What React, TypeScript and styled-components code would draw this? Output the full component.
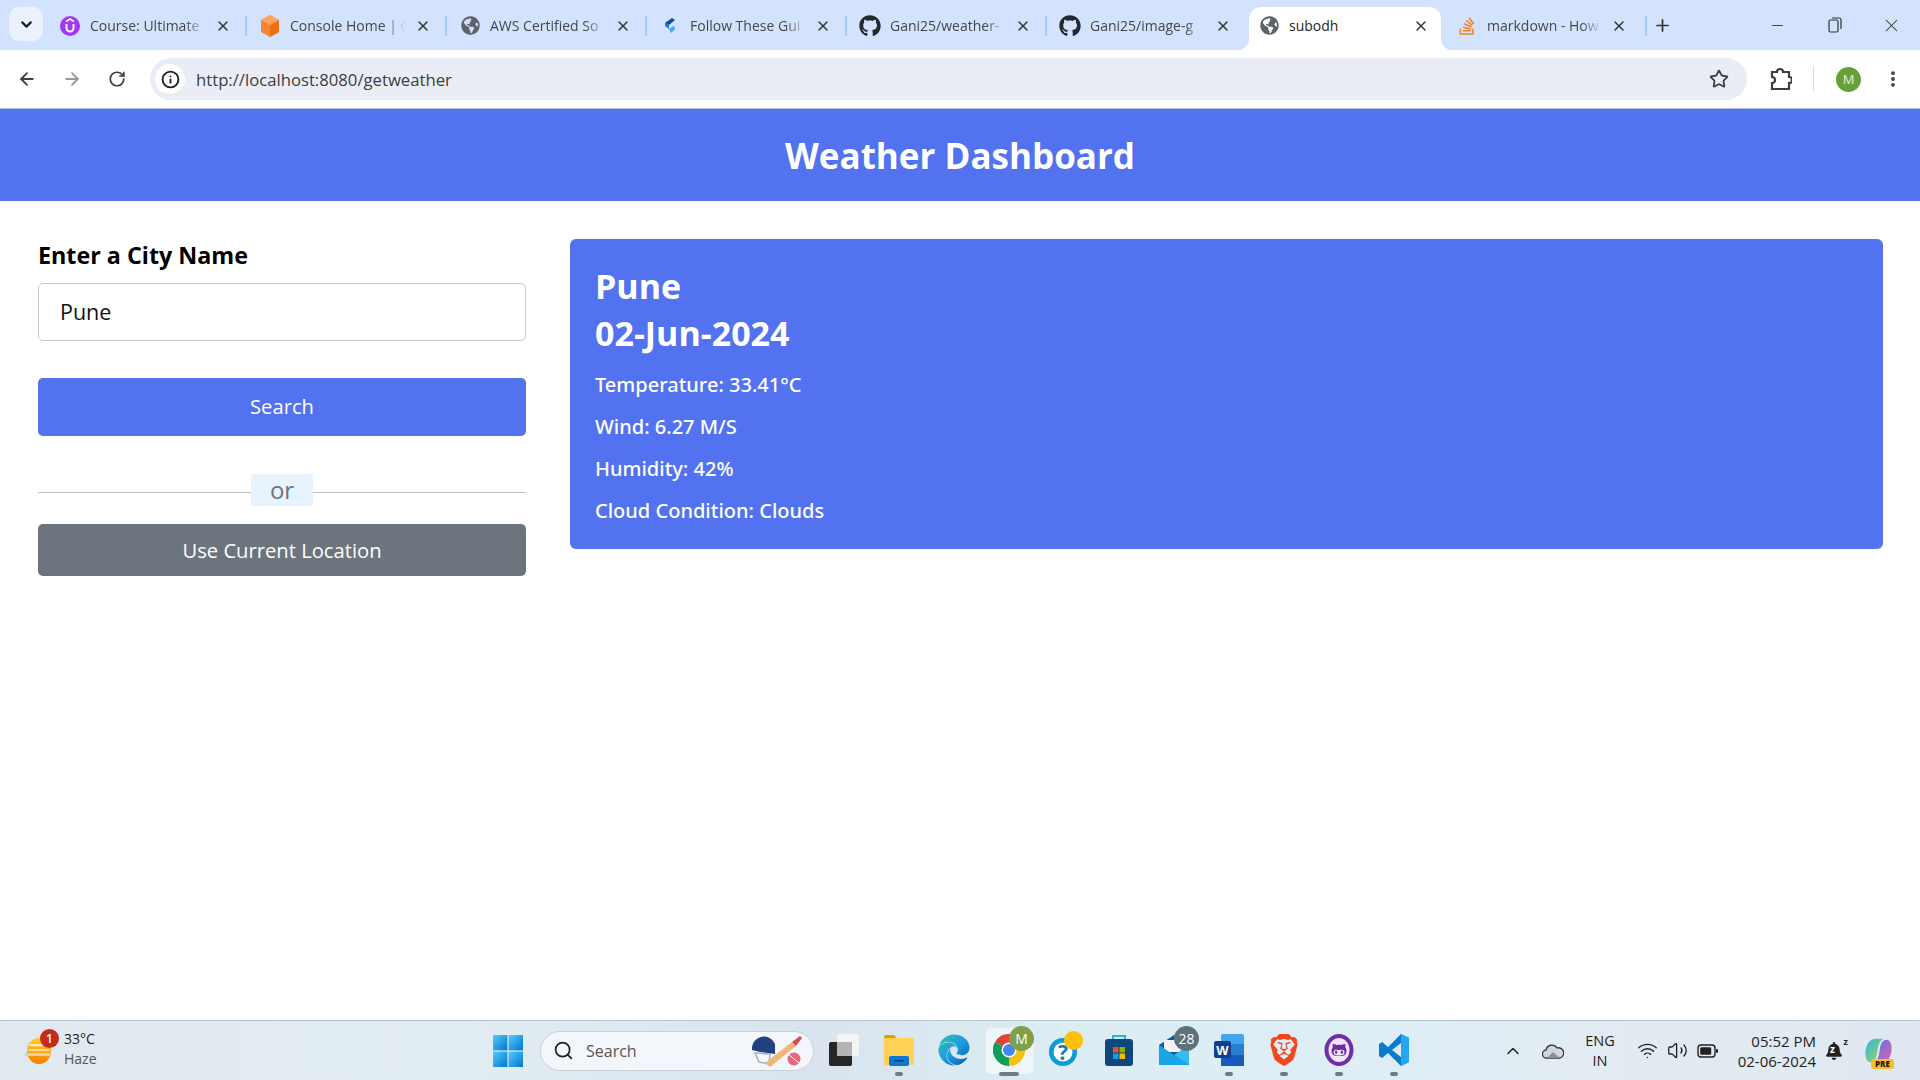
import React from 'react';
import styled, { createGlobalStyle } from 'styled-components';
import {
  ArrowLeft,
  ArrowRight,
  ChevronDown,
  ChevronUp,
  Info,
  Minus,
  MoreVertical,
  Plus,
  RotateCw,
  Search,
  Star,
  Volume2,
  Wifi,
  X,
} from 'lucide-react';
import { FaEdge, FaGithub, FaGithubAlt, FaGlobeAmericas, FaStackOverflow, FaBell } from 'react-icons/fa';
import { SiBrave } from 'react-icons/si';

const GlobalStyle = createGlobalStyle`
  html, body {
    margin: 0;
    padding: 0;
    width: 1920px;
    height: 1080px;
    overflow: hidden;
    background: #fff;
    font-family: "Open Sans", "Noto Sans", sans-serif;
  }
  * { box-sizing: border-box; }
`;

const Screen = styled.div`
  width: 1920px;
  height: 1080px;
  display: flex;
  flex-direction: column;
`;

const GradientDefs = styled.svg`
  display: block;
  width: 0;
  height: 0;
`;

// 탭 줄
const TabStrip = styled.div`
  height: 50px;
  background: #d3e3fd;
  display: flex;
  align-items: flex-end;
  padding-left: 9px;
  position: relative;
`;

const TabSearch = styled.div`
  width: 34px;
  height: 34px;
  margin: 0 3px 9px 0;
  border-radius: 10px;
  background: #ebf1fd;
  display: flex;
  align-items: center;
  justify-content: center;
  color: #1f1f1f;
`;

const Tab = styled.div<{ $active?: boolean; $divider?: boolean; $last?: boolean }>`
  width: ${(p) => (p.$active ? '192px' : p.$last ? '203px' : '200px')};
  margin: ${(p) => (p.$active ? '0 2px 0 3px' : '0')};
  height: 43px;
  display: flex;
  align-items: center;
  padding: 0 ${(p) => (p.$last ? '19px' : p.$active ? '12px' : '15px')} 6px ${(p) => (p.$active ? '9px' : '13px')};
  gap: 9px;
  position: relative;
  background: ${(p) => (p.$active ? '#fff' : 'transparent')};
  border-radius: 12px 12px 0 0;
  color: ${(p) => (p.$active ? '#1f1f1f' : '#45474a')};

  ${(p) =>
    p.$divider &&
    `&::after {
      content: '';
      position: absolute;
      right: -1px;
      top: 9px;
      height: 20px;
      width: 2px;
      background: #a8c7fa;
    }`}

  ${(p) =>
    p.$active &&
    `&::before, &::after {
      content: '';
      position: absolute;
      bottom: 0;
      width: 12px;
      height: 12px;
    }
    &::before {
      left: -12px;
      background: radial-gradient(circle at 0 0, transparent 12px, #fff 12.5px);
    }
    &::after {
      right: -12px;
      background: radial-gradient(circle at 100% 0, transparent 12px, #fff 12.5px);
    }`}
`;

const Favicon = styled.span`
  width: 22px;
  height: 22px;
  flex: none;
  display: flex;
  align-items: center;
  justify-content: center;
`;

const TabTitle = styled.span<{ $fade: boolean }>`
  flex: 1;
  min-width: 0;
  font-size: 14px;
  white-space: nowrap;
  ${(p) => p.$fade && 'mask-image: linear-gradient(90deg, #000 82%, transparent 100%);'}
`;

const TabClose = styled.span`
  display: flex;
  color: #333;
  flex: none;
`;

const NewTab = styled.span`
  display: flex;
  margin: 0 0 8px 7px;
  color: #333;
  align-self: flex-end;
  height: 34px;
  align-items: center;
`;

const WindowControls = styled.div`
  margin-left: auto;
  display: flex;
  align-self: flex-start;
  height: 50px;
  align-items: center;
  color: #333;
`;

const WindowButton = styled.span`
  width: 57px;
  display: flex;
  justify-content: center;
`;

// 주소 표시줄
const Toolbar = styled.div`
  height: 59px;
  background: #fff;
  border-radius: 10px 10px 0 0;
  border-bottom: 1px solid #aebfdc;
  display: flex;
  align-items: center;
  padding: 0 0 0 9px;
`;

const NavButton = styled.span<{ $dim?: boolean }>`
  width: 36px;
  margin-right: 9px;
  display: flex;
  justify-content: center;
  color: ${(p) => (p.$dim ? '#9a9a9a' : '#3c3f43')};
`;

const Omnibox = styled.div`
  width: 1597px;
  height: 42px;
  margin-left: 6px;
  border-radius: 21px;
  background: #eaedf6;
  display: flex;
  align-items: center;
  padding: 0 18px 0 5px;
  color: #3f4144;
`;

const InfoChip = styled.span`
  width: 30px;
  height: 30px;
  border-radius: 50%;
  background: #fff;
  display: flex;
  align-items: center;
  justify-content: center;
  color: #1f1f1f;
`;

const Url = styled.span`
  margin-left: 11px;
  font-size: 16.7px;
  flex: 1;
  color: #3c3d40;
`;

const ToolbarActions = styled.div`
  flex: 1;
  display: flex;
  align-items: center;
  padding-left: 23px;
  color: #3c3f43;
`;

const ToolbarDivider = styled.span`
  width: 1px;
  height: 26px;
  margin: 0 22px 0 21px;
  background: #d5dbe8;
`;

const Avatar = styled.span`
  width: 25px;
  height: 25px;
  border-radius: 50%;
  background: #689f38;
  color: #e8f1dc;
  font-size: 13px;
  display: flex;
  align-items: center;
  justify-content: center;
`;

const Kebab = styled.span`
  display: flex;
  margin-left: 22px;
`;

// 페이지 본문
const Page = styled.main`
  flex: 1;
  display: flex;
  flex-direction: column;
  min-height: 0;
  background: #fff;
`;

const Header = styled.header`
  height: 92px;
  background: #5372f0;
  color: #fff;
  display: flex;
  align-items: center;
  justify-content: center;
`;

const Title = styled.h1`
  margin: 0;
  font-size: 35px;
  font-weight: 700;
`;

const Content = styled.div`
  display: flex;
  align-items: flex-start;
  gap: 44px;
  padding: 38px 37px 0 38px;
`;

const FormColumn = styled.section`
  width: 488px;
  flex: none;
`;

const CityLabel = styled.h3`
  margin: 0 0 12px;
  font-size: 23.3px;
  line-height: 32px;
  font-weight: 700;
  color: #000;
`;

const CityInput = styled.div`
  height: 58px;
  border: 1px solid #c9c9c9;
  border-radius: 5px;
  padding: 0 21px 1px;
  display: flex;
  align-items: center;
  font-size: 21.5px;
  color: #111;
`;

const ActionButton = styled.div<{ $grey?: boolean }>`
  height: ${(p) => (p.$grey ? '52px' : '58px')};
  margin-top: ${(p) => (p.$grey ? '0' : '37px')};
  padding-bottom: ${(p) => (p.$grey ? '0' : '2px')};
  border-radius: 5px;
  background: ${(p) => (p.$grey ? '#6c757d' : '#5372f0')};
  color: #fff;
  display: flex;
  align-items: center;
  justify-content: center;
  font-size: 20.2px;
`;

const Separator = styled.div`
  height: 88px;
  padding-top: 38px;
  display: flex;
  justify-content: center;
  align-items: flex-start;
  background: linear-gradient(#bdbdbd, #bdbdbd) 0 56px / 100% 1px no-repeat;
`;

const SeparatorText = styled.span`
  width: 62px;
  height: 32px;
  background: #e7f3ff;
  color: #6c757d;
  font-size: 24px;
  line-height: 32px;
  text-align: center;
`;

const WeatherCard = styled.section`
  flex: 1;
  height: 310px;
  background: #5372f0;
  border-radius: 6px;
  padding: 24px 25px;
  color: #fff;
`;

const CardHeading = styled.h2`
  margin: 0 0 8px;
  font-size: 34px;
  line-height: 46.5px;
  font-weight: 700;
`;

const CardRow = styled.p`
  margin: 0;
  font-family: "Noto Sans", "Open Sans", sans-serif;
  font-size: 20px;
  line-height: 42px;
  font-weight: 500;
`;

// 작업 표시줄
const Taskbar = styled.footer`
  height: 60px;
  flex: none;
  border-top: 1px solid #b9c3cb;
  background: linear-gradient(90deg, #e0e9ee 0%, #e2edf3 22%, #d9e4ee 42%, #dcecf3 55%, #deeef6 70%, #e3ebf2 85%, #dfe8f0 100%);
  display: flex;
  align-items: center;
  position: relative;
`;

const WeatherWidget = styled.div`
  width: 490px;
  flex: none;
  display: flex;
  align-items: center;
  padding-left: 25px;
  gap: 11px;
`;

const SunBadgeWrap = styled.span`
  position: relative;
  display: flex;
  width: 28px;
  height: 26px;
`;

const AlertBadge = styled.span`
  position: absolute;
  top: -9px;
  left: 15px;
  width: 19px;
  height: 19px;
  border-radius: 50%;
  background: #c42b1c;
  color: #fff;
  font-size: 12px;
  font-weight: 600;
  display: flex;
  align-items: center;
  justify-content: center;
`;

const WidgetText = styled.div`
  margin-top: -3px;
  font-size: 14px;
  line-height: 20.5px;
  color: #222;
`;

const WidgetSub = styled.div`
  color: #555;
`;

const StartButton = styled.span`
  display: flex;
  width: 30px;
  margin-right: 17px;
  margin-left: 3px;
`;

const SearchPill = styled.div`
  width: 274px;
  height: 40px;
  border-radius: 20px;
  background: #f3f7fb;
  border: 1px solid #c7d0d9;
  display: flex;
  align-items: center;
  padding: 0 11px 0 12px;
  gap: 12px;
  color: #222;
  font-size: 16px;
  flex: none;
`;

const PillLabel = styled.span`
  flex: 1;
  color: #555;
`;

const TaskIcons = styled.div`
  display: flex;
  margin-left: 2px;
`;

const TaskIcon = styled.div<{ $active?: boolean; $running?: boolean }>`
  width: 55px;
  height: 56px;
  position: relative;
  display: flex;
  align-items: center;
  justify-content: center;
  padding-bottom: 2px;

  ${(p) =>
    p.$active &&
    `&::before {
      content: '';
      position: absolute;
      inset: 5px 4px 5px 5px;
      border-radius: 5px;
      background: rgba(255,255,255,.55);
      box-shadow: 3px 0 0 -1px rgba(255,255,255,.5);
    }`}

  ${(p) =>
    p.$running &&
    `&::after {
      content: '';
      position: absolute;
      bottom: 3px;
      left: 50%;
      transform: translateX(-50%);
      width: ${p.$active ? '20px' : '8px'};
      height: 4px;
      border-radius: 2px;
      background: #6f7b84;
    }`}

  & > svg { position: relative; }
`;

const IconBadge = styled.span<{ $bg: string }>`
  position: absolute;
  top: 3px;
  right: 2px;
  min-width: 25px;
  height: 25px;
  border-radius: 50%;
  background: ${(p) => p.$bg};
  color: #fff;
  font-size: 14px;
  display: flex;
  align-items: center;
  justify-content: center;
`;

const Tray = styled.div`
  margin-left: auto;
  display: flex;
  align-items: center;
  color: #222;
  height: 100%;
`;

const TrayIcon = styled.span<{ $w: number }>`
  width: ${(p) => p.$w}px;
  display: flex;
  justify-content: center;
`;

const TrayLang = styled.div`
  width: 44px;
  text-align: center;
  font-size: 14.5px;
  line-height: 20px;
  margin: 0 10px 0 5px;
`;

const Clock = styled.div`
  width: 92px;
  margin-left: 2px;
  text-align: right;
  font-size: 15px;
  line-height: 20px;
`;

const BellWrap = styled.span`
  position: relative;
  display: flex;
  margin: 0 21px 0 9px;
`;

const BellInnerZ = styled.span`
  position: absolute;
  top: 2px;
  left: 5px;
  color: #fff;
  font-size: 10px;
  line-height: 11px;
  font-weight: 700;
`;

const BellSnooze = styled.span`
  position: absolute;
  top: -5px;
  right: -5px;
  font-size: 9px;
  line-height: 10px;
  font-weight: 700;
`;

const CopilotWrap = styled.span`
  position: relative;
  display: flex;
  margin-right: 27px;
`;

const PreTag = styled.span`
  position: absolute;
  left: 7px;
  bottom: -4px;
  width: 23px;
  height: 10px;
  border-radius: 3px;
  background: #fbbf24;
  color: #1c1c1c;
  font-size: 8px;
  font-weight: 800;
  line-height: 10px;
  text-align: center;
`;

const Udemy = () => (
  <svg width="20" height="20" viewBox="0 0 20 20">
    <circle cx="10" cy="10" r="10" fill="#a435f0" />
    <path d="M6.5 8 V12 A3.5 3.5 0 0 0 13.5 12 V8" fill="none" stroke="#fff" strokeWidth="2" />
    <path d="M6 5.5 L10 3 L14 5.5" fill="none" stroke="#fff" strokeWidth="1.5" />
  </svg>
);

const AwsCube = () => (
  <svg width="20" height="22" viewBox="0 0 20 22">
    <path d="M10 0 L19 5 V17 L10 22 L1 17 V5 Z" fill="#f58536" />
    <path d="M10 10 L19 5 V17 L10 22 Z" fill="#ec7211" />
    <path d="M10 0 L19 5 L10 10 L1 5 Z" fill="#ffa45c" />
  </svg>
);

const GuideMark = () => (
  <svg width="16" height="18" viewBox="0 0 16 18">
    <path d="M10 1 L13 3 L7 8 L3 6 Z" fill="#0f4c9c" />
    <path d="M3 6 L7 8 L7 12 L3 9 Z" fill="#1976d2" />
    <path d="M7 12 L12 9 L13 12 L9 16 Z" fill="#42a5f5" />
  </svg>
);

const SunHaze = () => (
  <svg width="28" height="26" viewBox="0 0 28 26">
    <defs>
      <linearGradient id="hazeSun" x1="0" y1="0" x2="0" y2="1">
        <stop offset="0" stopColor="#ffd21f" />
        <stop offset="1" stopColor="#f57c00" />
      </linearGradient>
    </defs>
    <ellipse cx="14" cy="13" rx="12" ry="13" fill="url(#hazeSun)" />
    <rect x="4" y="6" width="20" height="2.2" rx="1.1" fill="#f7e9c4" />
    <rect x="3" y="11" width="22" height="2.2" rx="1.1" fill="#f5d9a0" />
    <rect x="0" y="15" width="26" height="3" rx="1.5" fill="#e8cfa0" />
  </svg>
);

const WinLogo = () => (
  <svg width="30" height="32" viewBox="0 0 30 32">
    <defs>
      <linearGradient id="winTiles" x1="0" y1="0" x2="1" y2="1">
        <stop offset="0" stopColor="#52cbfb" />
        <stop offset="1" stopColor="#0475d1" />
      </linearGradient>
    </defs>
    <rect x="0" y="0" width="14.4" height="15.4" fill="url(#winTiles)" />
    <rect x="15.6" y="0" width="14.4" height="15.4" fill="url(#winTiles)" />
    <rect x="0" y="16.6" width="14.4" height="15.4" fill="url(#winTiles)" />
    <rect x="15.6" y="16.6" width="14.4" height="15.4" fill="url(#winTiles)" />
  </svg>
);

const CricketArt = () => (
  <svg width="50" height="32" viewBox="0 0 50 32">
    <path d="M0 15 A12 12 0 0 1 23 9 L23 19 L8 17 Z" fill="#23407f" />
    <path d="M3 18 L18 19 L17 29 L7 27 Z" fill="none" stroke="#a8b0b8" strokeWidth="1.5" />
    <path d="M13 28 L40 7 L44 11 L18 32 Z" fill="#f0b67a" />
    <path d="M40 7 L48 1 L50 3 L44 11 Z" fill="#d94a4a" />
    <circle cx="42" cy="24" r="6.5" fill="#e9647d" />
    <path d="M37 20 L47 28" stroke="#fff" strokeWidth="1" />
  </svg>
);

const TaskView = () => (
  <svg width="30" height="32" viewBox="0 0 30 32">
    <rect x="0" y="8" width="23" height="24" rx="2" fill="#262626" />
    <rect x="8" y="0" width="22" height="22" rx="2" fill="#f4f4f4" />
    <rect x="8" y="8" width="15" height="14" fill="#b4b4b4" />
  </svg>
);

const Explorer = () => (
  <svg width="30" height="32" viewBox="0 0 30 32">
    <path d="M0 3 A2 2 0 0 1 2 1 H10 L14 5 H0 Z" fill="#d9a200" />
    <rect x="0" y="4" width="30" height="27" rx="1" fill="#ffd257" />
    <rect x="5" y="22" width="20" height="10" rx="2" fill="#0b78d4" />
    <rect x="10" y="26" width="10" height="1.5" fill="#0a3d73" />
  </svg>
);

const Chrome = () => (
  <svg width="32" height="32" viewBox="0 0 32 32">
    <path d="M16 16 L2.1 8 A16 16 0 0 1 29.9 8 Z" fill="#db4437" />
    <path d="M16 16 L29.9 8 A16 16 0 0 1 16 32 Z" fill="#f4c20d" />
    <path d="M16 16 L16 32 A16 16 0 0 1 2.1 8 Z" fill="#0f9d58" />
    <circle cx="16" cy="16" r="7.5" fill="#fff" />
    <circle cx="16" cy="16" r="6" fill="#4285f4" />
  </svg>
);

const HelpApp = () => (
  <svg width="38" height="38" viewBox="0 0 38 38">
    <circle cx="18" cy="21" r="14" fill="#0b9cd8" />
    <circle cx="18" cy="21" r="9.5" fill="#fff" />
    <text x="18" y="28.5" textAnchor="middle" fontSize="21" fontWeight="700" fill="#0b7db8" fontFamily="Open Sans, sans-serif">?</text>
    <circle cx="28.5" cy="9.5" r="9.5" fill="#ffc107" />
  </svg>
);

const Store = () => (
  <svg width="28" height="32" viewBox="0 0 28 32">
    <path d="M8 6 V2 H20 V6" fill="none" stroke="#1eb6e8" strokeWidth="2" />
    <rect x="0" y="5" width="28" height="27" rx="3" fill="#11457e" />
    <rect x="8" y="13" width="5.5" height="5.5" fill="#f25022" />
    <rect x="14.5" y="13" width="5.5" height="5.5" fill="#7fba00" />
    <rect x="8" y="19.5" width="5.5" height="5.5" fill="#00a4ef" />
    <rect x="14.5" y="19.5" width="5.5" height="5.5" fill="#ffb900" />
  </svg>
);

const Mail = () => (
  <svg width="30" height="30" viewBox="0 0 30 30">
    <path d="M0 10 L15 0 L30 10 V30 H0 Z" fill="#0f5c9c" />
    <path d="M5 5 H25 V17 H5 Z" fill="#f4f4f4" />
    <path d="M0 10 L15 20 L30 30 H0 Z" fill="#19a6e8" />
    <path d="M30 10 V30 L15 20 Z" fill="#35bdf2" />
  </svg>
);

const Word = () => (
  <svg width="30" height="32" viewBox="0 0 30 32">
    <rect x="7" y="0" width="23" height="32" rx="2" fill="#41a5ee" />
    <rect x="7" y="10" width="23" height="11" fill="#2b7cd3" />
    <rect x="7" y="21" width="23" height="11" fill="#185abd" />
    <rect x="0" y="7" width="17" height="17" rx="2" fill="#103f91" />
    <text x="8.5" y="20.5" textAnchor="middle" fontSize="13" fontWeight="700" fill="#fff" fontFamily="Liberation Sans, sans-serif">W</text>
  </svg>
);

const GithubDesktop = () => (
  <svg width="30" height="32" viewBox="0 0 30 32">
    <ellipse cx="15" cy="16" rx="14.5" ry="16" fill="#6f2da8" />
    <ellipse cx="15" cy="16" rx="10.5" ry="12" fill="#f0e6f7" />
    <FaGithubAlt x="7" y="8" size={16} color="#6f2da8" />
  </svg>
);

const VsCode = () => (
  <svg width="30" height="32" viewBox="0 0 30 32">
    <path d="M22 0 L9 13 L3 8 L0 10 V22 L3 24 L9 19 L22 32 L30 28 V4 Z M22 9 V23 L13 16 Z" fill="#0a7ccf" fillRule="evenodd" />
    <path d="M22 0 L30 4 V28 L22 32 Z" fill="#22a7f0" />
  </svg>
);

const Onedrive = () => (
  <svg width="22" height="16" viewBox="0 0 22 16">
    <path d="M5 15 A4 4 0 0 1 4 7 A6 6 0 0 1 15 5 A5 5 0 0 1 18 15 Z" fill="#d2d6da" stroke="#333" strokeWidth="1.3" />
    <path d="M5 15 L11 9 L18 15 Z" fill="#8a8f94" />
  </svg>
);

const Battery = () => (
  <svg width="21" height="14" viewBox="0 0 21 14">
    <rect x="1" y="1" width="17" height="12" rx="3" fill="none" stroke="#222" strokeWidth="1.4" />
    <rect x="3.2" y="3.2" width="11" height="7.6" rx="1.4" fill="#222" />
    <rect x="19" y="5" width="2" height="4" rx="1" fill="#222" />
  </svg>
);

const Copilot = () => (
  <svg width="29" height="28" viewBox="0 0 30 30">
    <defs>
      <linearGradient id="copilotL" x1="0" y1="0" x2="1" y2="1">
        <stop offset="0" stopColor="#2fb5e8" />
        <stop offset="1" stopColor="#a6d64a" />
      </linearGradient>
      <linearGradient id="copilotR" x1="0" y1="0" x2="1" y2="1">
        <stop offset="0" stopColor="#4a7be8" />
        <stop offset="1" stopColor="#e45fb0" />
      </linearGradient>
    </defs>
    <path d="M1 18 C1 8 6 2 12 2 H21 C17 3 15 8 14 14 C13 24 10 27 6 27 C3 27 1 23 1 18 Z" fill="url(#copilotL)" />
    <path d="M29 12 C29 22 24 28 18 28 H9 C13 27 15 22 16 16 C17 6 20 3 24 3 C27 3 29 7 29 12 Z" fill="url(#copilotR)" />
  </svg>
);

const tabs = [
  { title: 'Course: Ultimate', icon: <Udemy /> },
  { title: 'Console Home | C', icon: <AwsCube /> },
  { title: 'AWS Certified So', icon: <FaGlobeAmericas size={19} color="#5f6368" /> },
  { title: 'Follow These Gui', icon: <GuideMark /> },
  { title: 'Gani25/weather-', icon: <FaGithub size={22} color="#24292f" /> },
  { title: 'Gani25/image-g', icon: <FaGithub size={22} color="#24292f" /> },
  { title: 'subodh', icon: <FaGlobeAmericas size={19} color="#5f6368" />, active: true },
  { title: 'markdown - How', icon: <FaStackOverflow size={20} color="#f48024" />, last: true },
];

const weatherRows = [
  'Temperature: 33.41°C',
  'Wind: 6.27 M/S',
  'Humidity: 42%',
  'Cloud Condition: Clouds',
];

const App: React.FC = () => {
  return (
    <Screen>
      <GlobalStyle />
      <GradientDefs aria-hidden="true">
        <defs>
          <linearGradient id="edgeFill" x1="0" y1="0" x2="1" y2="1">
            <stop offset="0" stopColor="#35c1a0" />
            <stop offset="0.5" stopColor="#1b9de2" />
            <stop offset="1" stopColor="#0c59a4" />
          </linearGradient>
        </defs>
      </GradientDefs>

      <TabStrip>
        <TabSearch>
          <ChevronDown size={17} strokeWidth={3} />
        </TabSearch>
        {tabs.map((tab, i) => (
          <Tab
            key={tab.title}
            $active={tab.active}
            $last={tab.last}
            $divider={!tab.active && i !== 5}
          >
            <Favicon>{tab.icon}</Favicon>
            <TabTitle $fade={!tab.active}>{tab.title}</TabTitle>
            <TabClose>
              <X size={16} strokeWidth={2.2} />
            </TabClose>
          </Tab>
        ))}
        <NewTab>
          <Plus size={19} strokeWidth={2.2} />
        </NewTab>
        <WindowControls>
          <WindowButton>
            <Minus size={17} strokeWidth={1.3} />
          </WindowButton>
          <WindowButton>
            <svg width="14" height="16" viewBox="0 0 14 16" fill="none" stroke="#333" strokeWidth="1.2">
              <rect x="1" y="3" width="9" height="12" rx="1.5" />
              <path d="M4 1 H11 A2 2 0 0 1 13 3 V12" />
            </svg>
          </WindowButton>
          <WindowButton>
            <X size={21} strokeWidth={1.2} />
          </WindowButton>
        </WindowControls>
      </TabStrip>

      <Toolbar>
        <NavButton>
          <ArrowLeft size={20} strokeWidth={2.2} />
        </NavButton>
        <NavButton $dim>
          <ArrowRight size={20} strokeWidth={2.2} />
        </NavButton>
        <NavButton>
          <RotateCw size={18} strokeWidth={2.3} />
        </NavButton>
        <Omnibox>
          <InfoChip>
            <Info size={19} strokeWidth={2.4} />
          </InfoChip>
          <Url>http://localhost:8080/getweather</Url>
          <Star size={20} strokeWidth={2.2} />
        </Omnibox>
        <ToolbarActions>
          <svg width="22" height="24" viewBox="0 0 22 24" fill="none" stroke="#3c3f43" strokeWidth="2.2">
            <path d="M2 5 H7 A3 3 0 0 1 13 5 H19 V10 A3 3 0 0 1 19 16 V22 H2 V16 A3 3 0 0 0 2 10 Z" />
          </svg>
          <ToolbarDivider />
          <Avatar>M</Avatar>
          <Kebab>
            <MoreVertical size={20} strokeWidth={2.6} />
          </Kebab>
        </ToolbarActions>
      </Toolbar>

      <Page>
        <Header>
          <Title>Weather Dashboard</Title>
        </Header>
        <Content>
          <FormColumn>
            <CityLabel>Enter a City Name</CityLabel>
            <CityInput>Pune</CityInput>
            <ActionButton>Search</ActionButton>
            <Separator>
              <SeparatorText>or</SeparatorText>
            </Separator>
            <ActionButton $grey>Use Current Location</ActionButton>
          </FormColumn>
          <WeatherCard>
            <CardHeading>
              Pune
              <br />
              02-Jun-2024
            </CardHeading>
            {weatherRows.map((row) => (
              <CardRow key={row}>{row}</CardRow>
            ))}
          </WeatherCard>
        </Content>
      </Page>

      <Taskbar>
        <WeatherWidget>
          <SunBadgeWrap>
            <SunHaze />
            <AlertBadge>1</AlertBadge>
          </SunBadgeWrap>
          <WidgetText>
            33°C
            <WidgetSub>Haze</WidgetSub>
          </WidgetText>
        </WeatherWidget>
        <StartButton>
          <WinLogo />
        </StartButton>
        <SearchPill>
          <Search size={21} strokeWidth={2} />
          <PillLabel>Search</PillLabel>
          <CricketArt />
        </SearchPill>
        <TaskIcons>
          <TaskIcon>
            <TaskView />
          </TaskIcon>
          <TaskIcon $running>
            <Explorer />
          </TaskIcon>
          <TaskIcon>
            <FaEdge size={32} fill="url(#edgeFill)" />
          </TaskIcon>
          <TaskIcon $active $running>
            <Chrome />
            <IconBadge $bg="#7f9f48">M</IconBadge>
          </TaskIcon>
          <TaskIcon>
            <HelpApp />
          </TaskIcon>
          <TaskIcon>
            <Store />
          </TaskIcon>
          <TaskIcon>
            <Mail />
            <IconBadge $bg="#5f717d">28</IconBadge>
          </TaskIcon>
          <TaskIcon $running>
            <Word />
          </TaskIcon>
          <TaskIcon $running>
            <SiBrave size={32} color="#f1471d" />
          </TaskIcon>
          <TaskIcon $running>
            <GithubDesktop />
          </TaskIcon>
          <TaskIcon $running>
            <VsCode />
          </TaskIcon>
        </TaskIcons>
        <Tray>
          <TrayIcon $w={40}>
            <ChevronUp size={20} strokeWidth={1.8} />
          </TrayIcon>
          <TrayIcon $w={40}>
            <Onedrive />
          </TrayIcon>
          <TrayLang>
            ENG
            <br />
            IN
          </TrayLang>
          <TrayIcon $w={30}>
            <Wifi size={21} strokeWidth={1.6} />
          </TrayIcon>
          <TrayIcon $w={30}>
            <Volume2 size={21} strokeWidth={1.5} />
          </TrayIcon>
          <TrayIcon $w={30}>
            <Battery />
          </TrayIcon>
          <Clock>
            05:52 PM
            <br />
            02-06-2024
          </Clock>
          <BellWrap>
            <FaBell size={18} color="#222" />
            <BellInnerZ>z</BellInnerZ>
            <BellSnooze>z</BellSnooze>
          </BellWrap>
          <CopilotWrap>
            <Copilot />
            <PreTag>PRE</PreTag>
          </CopilotWrap>
        </Tray>
      </Taskbar>
    </Screen>
  );
};

export default App;
